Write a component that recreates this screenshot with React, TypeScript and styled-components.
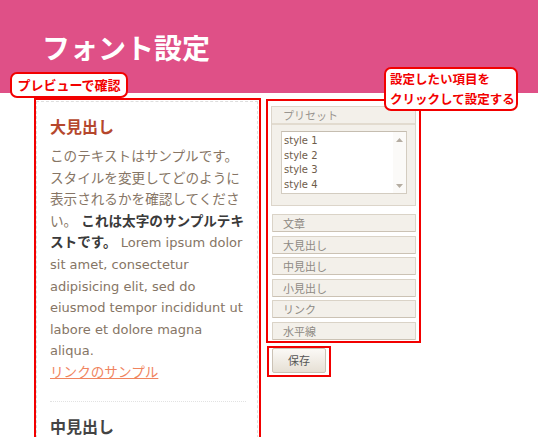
import React from 'react';
import styled, { createGlobalStyle } from 'styled-components';

const Global = createGlobalStyle`
  html, body { margin: 0; padding: 0; background: #fff; }
  body { font-family: "DejaVu Sans", "Noto Sans CJK JP", sans-serif; }
`;

const RED = '#f20000';
const JA = '"Noto Sans CJK JP", sans-serif';

const Page = styled.div`
  position: relative;
  width: 538px;
  height: 437px;
  overflow: hidden;
  background: #fff;
`;

const Header = styled.header`
  height: 93px;
  box-sizing: border-box;
  background: #df5087;
  display: flex;
  align-items: center;
  padding-left: 42px;
`;

const Title = styled.h1`
  margin: 0;
  font-family: ${JA};
  font-weight: 700;
  font-size: 28px;
  line-height: 1;
  color: #fff;
`;

const Main = styled.main`
  display: flex;
  align-items: flex-start;
  gap: 5px;
  padding: 5px 0 0 34px;
`;

const PreviewMark = styled.section`
  width: 227px;
  height: 400px;
  box-sizing: border-box;
  border: 2px solid ${RED};
  border-bottom: none;
  padding: 1px 1px 0 0;
  display: flex;
`;

const Preview = styled.div`
  flex: 1;
  border: 1px dashed #dedede;
  border-bottom: none;
  padding: 14px 9px 0 13px;
`;

const Heading = styled.h2<{ $tone: 'main' | 'sub' }>`
  margin: 0;
  font-family: ${JA};
  font-weight: 700;
  font-size: 16px;
  line-height: 20px;
  color: ${(p) => (p.$tone === 'main' ? '#b5472d' : '#444')};
`;

const Para = styled.p`
  margin: 10px 0 0 0;
  width: 197px;
  font-family: "DejaVu Sans", "Noto Sans CJK JP", sans-serif;
  font-size: 13px;
  line-height: 21.6px;
  color: #867565;
`;

const Ja = styled.span`
  font-family: ${JA};
  font-size: 13.6px;
  line-height: 1;
`;

const Bold = styled.strong`
  font-family: ${JA};
  font-size: 13.6px;
  line-height: 1;
  font-weight: 700;
  color: #3a3a3a;
`;

const SampleLink = styled.a`
  font-family: ${JA};
  font-size: 13.6px;
  line-height: 1;
  color: #f0845e;
  text-decoration: underline;
`;

const Divider = styled.hr`
  margin: 17px 0 14px 0;
  width: 196px;
  border: none;
  border-top: 1px dotted #e2e2e2;
`;

const RightCol = styled.div`
  display: flex;
  flex-direction: column;
  align-items: flex-start;
  gap: 3px;
  margin-top: 1px;
`;

const SettingsMark = styled.div`
  width: 155px;
  box-sizing: border-box;
  border: 2px solid ${RED};
  padding: 5px 3px 1px 3px;
  display: flex;
  flex-direction: column;
`;

const PresetPanel = styled.div`
  border: 1px solid #dcd5ca;
  background: #f3f0ea;
  padding-bottom: 11px;
  margin-bottom: 8px;
`;

const PanelHead = styled.div`
  height: 16px;
  line-height: 16px;
  padding-left: 11px;
  font-family: ${JA};
  font-size: 11px;
  color: #9a9690;
  border-bottom: 2px solid #e2dbcf;
`;

const ListBox = styled.div`
  margin: 6px 0 0 9px;
  width: 126px;
  height: 63px;
  box-sizing: border-box;
  background: #fff;
  border: 1px solid #d3ccc0;
  border-top-color: #c5bdb0;
  display: flex;
`;

const Items = styled.ul`
  list-style: none;
  margin: 0;
  padding: 2px 0 0 2px;
  flex: 1;
`;

const Item = styled.li`
  font-family: "DejaVu Sans", sans-serif;
  font-size: 10px;
  line-height: 14.7px;
  color: #6e5c4a;
`;

const ScrollBar = styled.div`
  width: 13px;
  display: flex;
  flex-direction: column;
  justify-content: space-between;
  align-items: center;
  padding: 6px 0 5px 0;
  background: #fbfaf8;
`;

const ButtonList = styled.div`
  display: flex;
  flex-direction: column;
  gap: 3.6px;
`;

const ItemButton = styled.button`
  height: 18px;
  box-sizing: border-box;
  margin: 0 0 0 1px;
  padding: 0 0 0 10px;
  text-align: left;
  background: #f3f0ea;
  border: 1px solid #dad3c7;
  border-bottom-color: #cbc2b4;
  border-radius: 1px;
  font-family: ${JA};
  font-size: 11px;
  line-height: 16px;
  color: #8e8a84;
`;

const SaveMark = styled.div`
  margin-left: 1px;
  width: 64px;
  box-sizing: border-box;
  border: 2px solid ${RED};
  padding: 0 3px 2px 3px;
`;

const SaveButton = styled.button`
  width: 54px;
  height: 25px;
  padding: 0;
  background: linear-gradient(#fbf9f6, #e6e0d5);
  border: 1px solid #cbc2b5;
  border-radius: 2px;
  font-family: ${JA};
  font-size: 11px;
  color: #555;
`;

const Callout = styled.div<{ $left: number; $top: number; $w: number; $h: number }>`
  position: absolute;
  left: ${(p) => p.$left}px;
  top: ${(p) => p.$top}px;
  width: ${(p) => p.$w}px;
  height: ${(p) => p.$h}px;
  box-sizing: border-box;
  border: 2px solid ${RED};
  border-radius: 7px;
  background: #fff;
  font-family: ${JA};
  font-weight: 700;
  color: ${RED};
  white-space: nowrap;
`;

const CalloutLeftText = styled.div`
  font-size: 13px;
  line-height: 22px;
  text-align: center;
`;

const CalloutRightText = styled.div`
  font-size: 12.5px;
  line-height: 20px;
  padding: 0 0 0 4px;
`;

const Arrow = ({ up }: { up?: boolean }) => (
  <svg width="7" height="4" viewBox="0 0 7 4">
    <path d={up ? 'M0 4 L3.5 0 L7 4 Z' : 'M0 0 L3.5 4 L7 0 Z'} fill="#b5ada2" />
  </svg>
);

const buttons = ['文章', '大見出し', '中見出し', '小見出し', 'リンク', '水平線'];

export default function App() {
  return (
    <Page>
      <Global />
      <Header>
        <Title>フォント設定</Title>
      </Header>
      <Main>
        <PreviewMark>
          <Preview>
            <Heading $tone="main">大見出し</Heading>
            <Para>
              <Ja>このテキストはサンプルです。スタイルを変更してどのように表示されるかを確認してください。</Ja>{' '}
              <Bold>これは太字のサンプルテキストです。</Bold> Lorem ipsum dolor sit amet, consectetur
              adipisicing elit, sed do eiusmod tempor incididunt ut labore et dolore magna aliqua.
              <br />
              <SampleLink href="#">リンクのサンプル</SampleLink>
            </Para>
            <Divider />
            <Heading $tone="sub">中見出し</Heading>
          </Preview>
        </PreviewMark>
        <RightCol>
          <SettingsMark>
            <PresetPanel>
              <PanelHead>プリセット</PanelHead>
              <ListBox>
                <Items>
                  <Item>style 1</Item>
                  <Item>style 2</Item>
                  <Item>style 3</Item>
                  <Item>style 4</Item>
                </Items>
                <ScrollBar>
                  <Arrow up />
                  <Arrow />
                </ScrollBar>
              </ListBox>
            </PresetPanel>
            <ButtonList>
              {buttons.map((b) => (
                <ItemButton key={b}>{b}</ItemButton>
              ))}
            </ButtonList>
          </SettingsMark>
          <SaveMark>
            <SaveButton>保存</SaveButton>
          </SaveMark>
        </RightCol>
      </Main>
      <Callout $left={10} $top={72} $w={118} $h={26}>
        <CalloutLeftText>プレビューで確認</CalloutLeftText>
      </Callout>
      <Callout $left={384} $top={67} $w={134} $h={44}>
        <CalloutRightText>
          設定したい項目を
          <br />
          クリックして設定する
        </CalloutRightText>
      </Callout>
    </Page>
  );
}
